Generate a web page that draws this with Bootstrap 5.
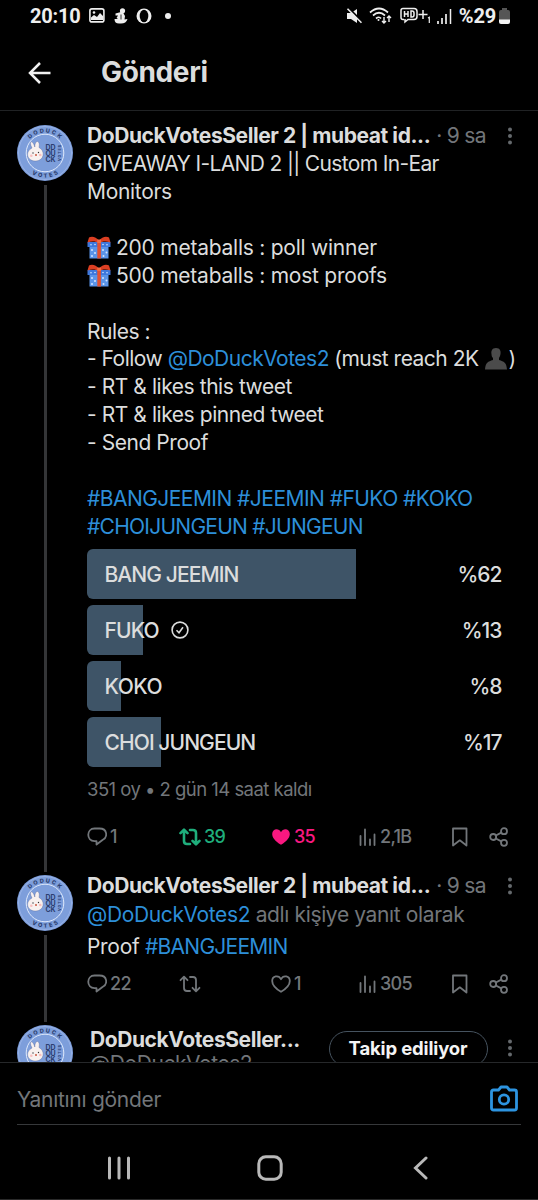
<!DOCTYPE html>
<html lang="tr">
<head>
<meta charset="utf-8">
<meta name="viewport" content="width=device-width, initial-scale=1">
<title>Gönderi</title>
<link href="https://cdn.jsdelivr.net/npm/bootstrap@5.3.0/dist/css/bootstrap.min.css" rel="stylesheet">
<style>
body{background:#000;color:#dcdddd;font-family:Inter,"Liberation Sans",sans-serif;font-size:21px;line-height:28px;letter-spacing:-.3px}
svg{display:block;flex:none}
.phone{width:538px;height:1200px;border-bottom:1px solid #2a2a2a}
.statusbar{height:32px;padding:0 28px 0 30px;font-family:Roboto,sans-serif;font-size:20px;font-weight:700;letter-spacing:-.2px;color:#eee}
.appbar{height:80px;padding:4px 28px 0;border-bottom:1px solid #202224}
.page-title{font-size:28px;font-weight:700;letter-spacing:-.35px;margin-left:50px}
.rail{width:56px;margin-bottom:-11px}
.thread{width:3px;background:#343537}
.post{padding:0 17px;gap:14px}
.post-a{height:750px;padding-top:14px}
.post-b{height:150px;padding-top:14px}
.post-c{height:60px;padding-top:14px}
.post-main{margin-top:-3px;min-width:0}
.who{font-weight:700;letter-spacing:-.42px}
.ago{margin-left:6px;letter-spacing:-.7px}
.dim{color:#72767a}
.tag{color:#2d8fd9}
.kebab{margin-left:auto;margin-right:8px}
.line{height:28px;white-space:nowrap}
.t1{letter-spacing:-.65px}
.t2{letter-spacing:-.24px}
.t3{letter-spacing:-.51px}
.t4{letter-spacing:-.44px}
.t5{letter-spacing:-.54px}
.t6{letter-spacing:-.75px}
.t7{letter-spacing:-.28px}
.poll{margin-top:8px;gap:6px}
.choice{height:50px;padding:2px 19.500px 0 17.500px;letter-spacing:-.85px;font-weight:500}
.choice .ms-auto{letter-spacing:-1px}
.choice .spaced{letter-spacing:-.5px}
.choice .tight{letter-spacing:-.92px}
.fill{left:0;top:0;height:50px;background:#3e5467;border-radius:6px 0 0 6px}
.meta{font-size:18.5px;margin-top:8px;letter-spacing:-.53px}
.acts{display:grid;grid-template-columns:92px 92px 88px 92px 38px 22px;font-size:18px;color:#72767a;letter-spacing:-.7px;height:28px;font-weight:500}
.acts>span{display:flex;align-items:center;gap:3px}
.follow{width:159px;height:36px;border:1.5px solid #46535f;color:#f4f4f4;font-size:18.5px;font-weight:700;margin-top:6px;margin-right:19.500px;letter-spacing:-.15px}
.composer{height:63px;border-top:1px solid #26282a;padding:9px 17px 0}
.field{border-bottom:1.5px solid #36383a}
.navkeys{height:74px;padding-top:23px}
.ico{fill:none;stroke:#72767a;stroke-width:1.8;stroke-linejoin:round;stroke-linecap:round}
</style>
</head>
<body>
<svg width="0" height="0" class="position-absolute" aria-hidden="true">
<defs>
<symbol id="avatar" viewBox="0 0 56 56">
<circle cx="28" cy="28" r="28" fill="#7d9edb"/>
<circle cx="28" cy="28" r="26.5" fill="none" stroke="#a9c0ec" stroke-width=".6"/>
<circle cx="28" cy="28" r="18.8" fill="none" stroke="#dfe9fb" stroke-width="1"/>
<path id="arcTop" d="M7.5 28a20.5 20.5 0 0 1 41 0" fill="none"/>
<path id="arcBot" d="M3.500 28a24.500 24.500 0 0 0 49 0" fill="none"/>
<g font-family="Inter,sans-serif" font-weight="800" fill="#2c3f70" letter-spacing="0">
<text font-size="5.600" letter-spacing="1.700"><textPath href="#arcTop" startOffset="15">DODUCK</textPath></text>
<text font-size="5.600" letter-spacing="2.200"><textPath href="#arcBot" startOffset="24.500">VOTES</textPath></text>
<g font-size="7" font-weight="700"><text x="28.5" y="25.2" textLength="10">DD</text><text x="28.5" y="31.2" textLength="10">OU</text><text x="28.5" y="37.2" textLength="10">CK</text></g>
<text font-size="3.6" transform="translate(43.6 36) rotate(-90)" textLength="16">VOTES</text>
</g>
<path d="M15 23c-4-8 1-8 2.800-1c0-8 6-7 4.200.5c6.500 3 5.500 13.500-3.500 13.500s-10.500-9.500-3.500-13z" fill="#f8f1ef" stroke="#54669a" stroke-width=".4"/>
<circle cx="16" cy="28" r=".7" fill="#333"/><circle cx="21.500" cy="27.500" r=".7" fill="#333"/><circle cx="19" cy="30" r="1" fill="#c8573f"/><circle cx="14.300" cy="30.800" r="1.300" fill="#f7bfc0"/><circle cx="23.300" cy="30" r="1.300" fill="#f7bfc0"/>
</symbol>
<symbol id="gift" viewBox="0 0 24 24">
<path d="M2.500 10h19v12.500h-19z" fill="#5b94e8"/><path d="M.5 6h23v5h-23z" fill="#3e78dc"/>
<g fill="#d3e4ff"><circle cx="5" cy="14" r="1"/><circle cx="8" cy="17" r="1"/><circle cx="5" cy="20" r="1"/><circle cx="16" cy="14" r="1"/><circle cx="19.500" cy="16.500" r="1"/><circle cx="16.500" cy="20" r="1"/><circle cx="4" cy="8.700" r=".8"/><circle cx="8" cy="8.500" r=".8"/><circle cx="16" cy="8.500" r=".8"/><circle cx="20" cy="8.700" r=".8"/></g>
<path d="M10.300 6h3.600v16.500h-3.600z" fill="#e2502f"/>
<path d="M12 5C9 0 4 0 2 1.500L.5 6.500C5 5 9 5.500 12 7c3-1.500 7-2 11.500-.5L22 1.500C20 0 15 0 12 5z" fill="#dc3f22"/><path d="M10.200 3.500h3.800v3.500h-3.800z" fill="#f36b42"/>
</symbol>
<symbol id="reply" viewBox="0 0 20 20"><path d="M7.500 1.500h5c8 0 8.500 8.500 3 11.500L9.500 17.500v-3.300H7.500C-.8 14.200-.8 1.500 7.500 1.500z"/></symbol>
<symbol id="rt" viewBox="0 0 22 18"><path d="M1.500 5.200 5 1.700l3.500 3.500M5 2v11q0 3 3 3h3M20.500 12.800 17 16.300l-3.500-3.500M17 16V5q0-3-3-3h-3"/></symbol>
<symbol id="heart" viewBox="0 0 20 18"><path d="M10 16.800C4 13.200 1.200 9.500 1.200 6c0-5 6.300-6.500 8.800-1.800C12.500-.5 18.800 1 18.800 6c0 3.500-2.800 7.200-8.800 10.800z"/></symbol>
<symbol id="views" viewBox="0 0 18 18"><path d="M1.500 8v9M6 1.500V17M11 11.500V17M15.500 6.500V17"/></symbol>
<symbol id="save" viewBox="0 0 18 20"><path d="M2 1.500h13.500v17l-6.700-5.200L2 18.500z"/></symbol>
<symbol id="share" viewBox="0 0 20 20"><circle cx="4.200" cy="10" r="3"/><circle cx="15" cy="4.200" r="3"/><circle cx="15" cy="15.800" r="3"/><path d="M6.900 8.500l5.400-2.900M6.900 11.500l5.400 2.900"/></symbol>
<symbol id="dots" viewBox="0 0 6 18"><g fill="#65696d"><circle cx="3" cy="2.500" r="2"/><circle cx="3" cy="9" r="2"/><circle cx="3" cy="15.500" r="2"/></g></symbol>
</defs>
</svg>

<div class="phone d-flex flex-column overflow-hidden">
<header class="statusbar d-flex align-items-center justify-content-between">
<div class="d-flex align-items-center">
<span>20:10</span>
<svg class="ms-2" width="16" height="15" viewBox="0 0 16 15"><rect x=".9" y=".9" width="14" height="13" rx="2" fill="none" stroke="#eee" stroke-width="1.600"/><path d="M2 12V9.500L5 7l3 2 3-4 3 3v4z" fill="#eee"/><circle cx="5" cy="4.500" r="1.300" fill="#eee"/></svg>
<svg style="margin-left:9px" width="14" height="16" viewBox="0 0 14 16"><circle cx="8.500" cy="2.800" r="2.600" fill="#eee"/><path d="M7 4 1.500 5.500v2L4 7.500 2.500 10 4 11H.5Q.5 16 6 15.500q6 .5 7.500-4.500L10.500 11.500 11 8 9 4.500z" fill="#eee"/><path d="M7 6.500v5" stroke="#000" stroke-width=".8"/></svg>
<svg style="margin-left:8px" width="16" height="16" viewBox="0 0 16 16"><ellipse cx="8" cy="8" rx="7.500" ry="7.500" fill="#eee"/><ellipse cx="8" cy="8" rx="4.300" ry="6.300" fill="#000"/></svg>
<svg style="margin-left:13px" width="6" height="6" viewBox="0 0 6 6"><circle cx="3" cy="3" r="3" fill="#eee"/></svg>
</div>
<div class="d-flex align-items-center">
<svg width="16" height="16" viewBox="0 0 16 16"><path d="M1 5h4l6-4v14L5 11H1z" fill="#eee"/><path d="M2.500 0l14 14" stroke="#000" stroke-width="2"/><path d="M1.500.8l14 14" stroke="#eee" stroke-width="1.600"/></svg>
<svg style="margin-left:7px" width="23" height="17" viewBox="0 0 23 17" fill="none" stroke="#eee" stroke-width="1.700"><path d="M1 5.500q9-8 18 0M4 8.500q6-5.500 12 0M7 11.500q3-2.500 5 0"/><path d="M15 10v6m-2-2 2 2 2-2M20 15V9m-2 2 2-2 2 2" stroke-width="1.400"/><circle cx="9.500" cy="13" r="1" fill="#eee" stroke="none"/></svg>
<svg style="margin-left:8px" width="31" height="17" viewBox="0 0 31 17" fill="none" stroke="#eee" stroke-width="1.500"><path d="M4 12.500H3q-2 0-2-2v-7q0-2 2-2h11q3 0 3 3v5q0 3-3 3H8L5 15v-3"/><path d="M4.500 4v6M8 4v6M4.500 7H8M11 4v6h1q2 0 2-2V6q0-2-2-2zM18.500 7.500h9M23 3v9"/><path d="M28 11l1.300-.8V16" stroke-width="1.200"/></svg>
<svg style="margin-left:6px" width="15" height="16" viewBox="0 0 15 16" stroke="#eee" stroke-width="2"><path d="M1 13v3M5 10v6M9 6v10" stroke-width="1.700"/><path d="M13.500 1v15" stroke-width="1.500"/></svg>
<span style="margin-left:7px">%29</span>
<svg style="margin-left:3px" width="11" height="16" viewBox="0 0 11 16"><path d="M3 0h5v2h1q2 0 2 2v8H0V4q0-2 2-2h1z" fill="#555"/><path d="M0 11.500h11V14q0 2-2 2H2q-2 0-2-2z" fill="#f4f4f4"/></svg>
</div>
</header>

<nav class="appbar d-flex align-items-center">
<svg width="23" height="22" viewBox="0 0 23 22" fill="none" stroke="#f0f0f0" stroke-width="2.500"><path d="M22.500 11H2M12 1 2 11l10 10"/></svg>
<h1 class="page-title mb-0">Gönderi</h1>
</nav>

<main class="flex-grow-1 overflow-hidden" style="min-height:0">
<article class="post post-a d-flex">
<div class="rail d-flex flex-column align-items-center"><svg width="56" height="56"><use href="#avatar"/></svg><div class="thread flex-grow-1 mt-1"></div></div>
<div class="post-main flex-grow-1">
<div class="line d-flex align-items-center"><span class="who">DoDuckVotesSeller 2 | mubeat id...</span><span class="dim ago">· 9 sa</span><svg class="kebab" width="6" height="18"><use href="#dots"/></svg></div>
<div class="line"><span class="t1">GIVEAWAY I-LAND 2 || Custom In-Ear</span></div>
<div class="line">Monitors</div>
<div class="line"></div>
<div class="line d-flex align-items-center"><svg width="24" height="24" style="margin-right:5px"><use href="#gift"/></svg><span class="t2">200 metaballs : poll winner</span></div>
<div class="line d-flex align-items-center"><svg width="24" height="24" style="margin-right:5px"><use href="#gift"/></svg><span class="t2">500 metaballs : most proofs</span></div>
<div class="line"></div>
<div class="line t4">Rules :</div>
<div class="line d-flex align-items-center" style="margin-top:-1px"><span class="t3">- Follow <span class="tag">@DoDuckVotes2</span> (must reach 2K</span><svg style="margin:0 2px 0 6px" width="22" height="22" viewBox="0 0 22 22"><path d="M11 0c4 0 5 3 4.500 6-.3 2-1 3-1.500 4v2c5 1.500 7.500 2.500 8 9.500H0c.5-7 3-8 8-9.500v-2C7 9 6.500 8 6.500 6 6 3 7 0 11 0z" fill="#4b4b4b"/></svg>)</div>
<div class="line t4">- RT &amp; likes this tweet</div>
<div class="line t4">- RT &amp; likes pinned tweet</div>
<div class="line t4">- Send Proof</div>
<div class="line"></div>
<div class="line tag t5">#BANGJEEMIN #JEEMIN #FUKO #KOKO</div>
<div class="line tag t6">#CHOIJUNGEUN #JUNGEUN</div>
<div class="poll d-flex flex-column">
<div class="choice position-relative d-flex align-items-center"><div class="fill position-absolute" style="width:269px"></div><span class="position-relative tight">BANG JEEMIN</span><span class="ms-auto">%62</span></div>
<div class="choice position-relative d-flex align-items-center"><div class="fill position-absolute" style="width:56px"></div><span class="position-relative">FUKO</span><svg style="margin:-3px 0 0 12px" width="18" height="18" viewBox="0 0 18 18" fill="none" stroke="#dcdddd" stroke-width="1.600"><circle cx="9" cy="9" r="7.900"/><path d="M5.500 9.200 8 11.700l4-5.500"/></svg><span class="ms-auto">%13</span></div>
<div class="choice position-relative d-flex align-items-center"><div class="fill position-absolute" style="width:34px"></div><span class="position-relative spaced">KOKO</span><span class="ms-auto">%8</span></div>
<div class="choice position-relative d-flex align-items-center"><div class="fill position-absolute" style="width:74px"></div><span class="position-relative tight">CHOI JUNGEUN</span><span class="ms-auto">%17</span></div>
</div>
<div class="line dim meta">351 oy • 2 gün 14 saat kaldı</div>
<div class="acts" style="margin-top:20px">
<span><svg class="ico" width="20" height="20"><use href="#reply"/></svg>1</span>
<span style="color:#1fae7c"><svg class="ico" style="stroke:#1fae7c;stroke-width:2.600" width="22" height="18"><use href="#rt"/></svg>39</span>
<span style="color:#f91880"><svg style="fill:#f91880" width="20" height="18"><use href="#heart"/></svg>35</span>
<span><svg class="ico" width="18" height="18"><use href="#views"/></svg>2,1B</span>
<span><svg class="ico" width="18" height="20"><use href="#save"/></svg></span>
<span><svg class="ico" width="20" height="20"><use href="#share"/></svg></span>
</div>
</div>
</article>

<article class="post post-b d-flex">
<div class="rail d-flex flex-column align-items-center"><svg width="56" height="56"><use href="#avatar"/></svg><div class="thread flex-grow-1 mt-1"></div></div>
<div class="post-main flex-grow-1">
<div class="line d-flex align-items-center"><span class="who">DoDuckVotesSeller 2 | mubeat id...</span><span class="dim ago">· 9 sa</span><svg class="kebab" width="6" height="18"><use href="#dots"/></svg></div>
<div class="line dim" style="margin-top:1px;letter-spacing:-.37px"><span class="tag">@DoDuckVotes2</span> adlı kişiye yanıt olarak</div>
<div class="line mt-1">Proof <span class="tag t6">#BANGJEEMIN</span></div>
<div class="acts" style="margin-top:9px">
<span><svg class="ico" width="20" height="20"><use href="#reply"/></svg>22</span>
<span><svg class="ico" width="22" height="18"><use href="#rt"/></svg></span>
<span><svg class="ico" width="20" height="18"><use href="#heart"/></svg>1</span>
<span><svg class="ico" width="18" height="18"><use href="#views"/></svg>305</span>
<span><svg class="ico" width="18" height="20"><use href="#save"/></svg></span>
<span><svg class="ico" width="20" height="20"><use href="#share"/></svg></span>
</div>
</div>
</article>

<article class="post post-c d-flex">
<div class="rail"><svg width="56" height="56"><use href="#avatar"/></svg></div>
<div class="flex-grow-1 d-flex align-items-start" style="padding-left:3px">
<div style="padding-top:1px"><div class="line who">DoDuckVotesSeller...</div><div class="line dim t4" style="margin-top:-4px">@DoDuckVotes2</div></div>
<button class="btn follow rounded-pill p-0 ms-auto">Takip ediliyor</button>
<svg width="6" height="18" style="margin:14px 8px 0 0"><use href="#dots"/></svg>
</div>
</article>
</main>

<footer>
<div class="composer"><div class="field d-flex align-items-center justify-content-between h-100"><span class="dim t7 pt-1">Yanıtını gönder</span>
<svg width="28" height="27" viewBox="0 0 28 27" style="margin-right:3px" fill="none" stroke="#2d94e0" stroke-width="2.800" stroke-linejoin="round"><path d="M3.500 5h5L11 2h6l2.500 3h5q2 0 2 2v16q0 2-2 2h-21q-2 0-2-2V7q0-2 2-2z"/><circle cx="14" cy="14.500" r="4.700"/></svg></div></div>
<div class="navkeys d-flex align-items-start">
<svg style="margin:8px 0 0 107px" width="24" height="24" viewBox="0 0 24 24" stroke="#b9b9b9" stroke-width="3" stroke-linecap="round"><path d="M2.500 2v20M12 2v20M21.500 2v20"/></svg>
<svg style="margin:7px 0 0 126px" width="26" height="26" viewBox="0 0 26 26" fill="none" stroke="#b9b9b9" stroke-width="3"><rect x="1.800" y="1.800" width="22.400" height="22.400" rx="7"/></svg>
<svg style="margin:8px 0 0 130px" width="16" height="24" viewBox="0 0 16 24" fill="none" stroke="#b9b9b9" stroke-width="3" stroke-linecap="round"><path d="M13 2 2.500 12 13 22"/></svg>
</div>
</footer>
</div>
<script src="https://cdn.jsdelivr.net/npm/bootstrap@5.3.0/dist/js/bootstrap.bundle.min.js"></script>
</body>
</html>
